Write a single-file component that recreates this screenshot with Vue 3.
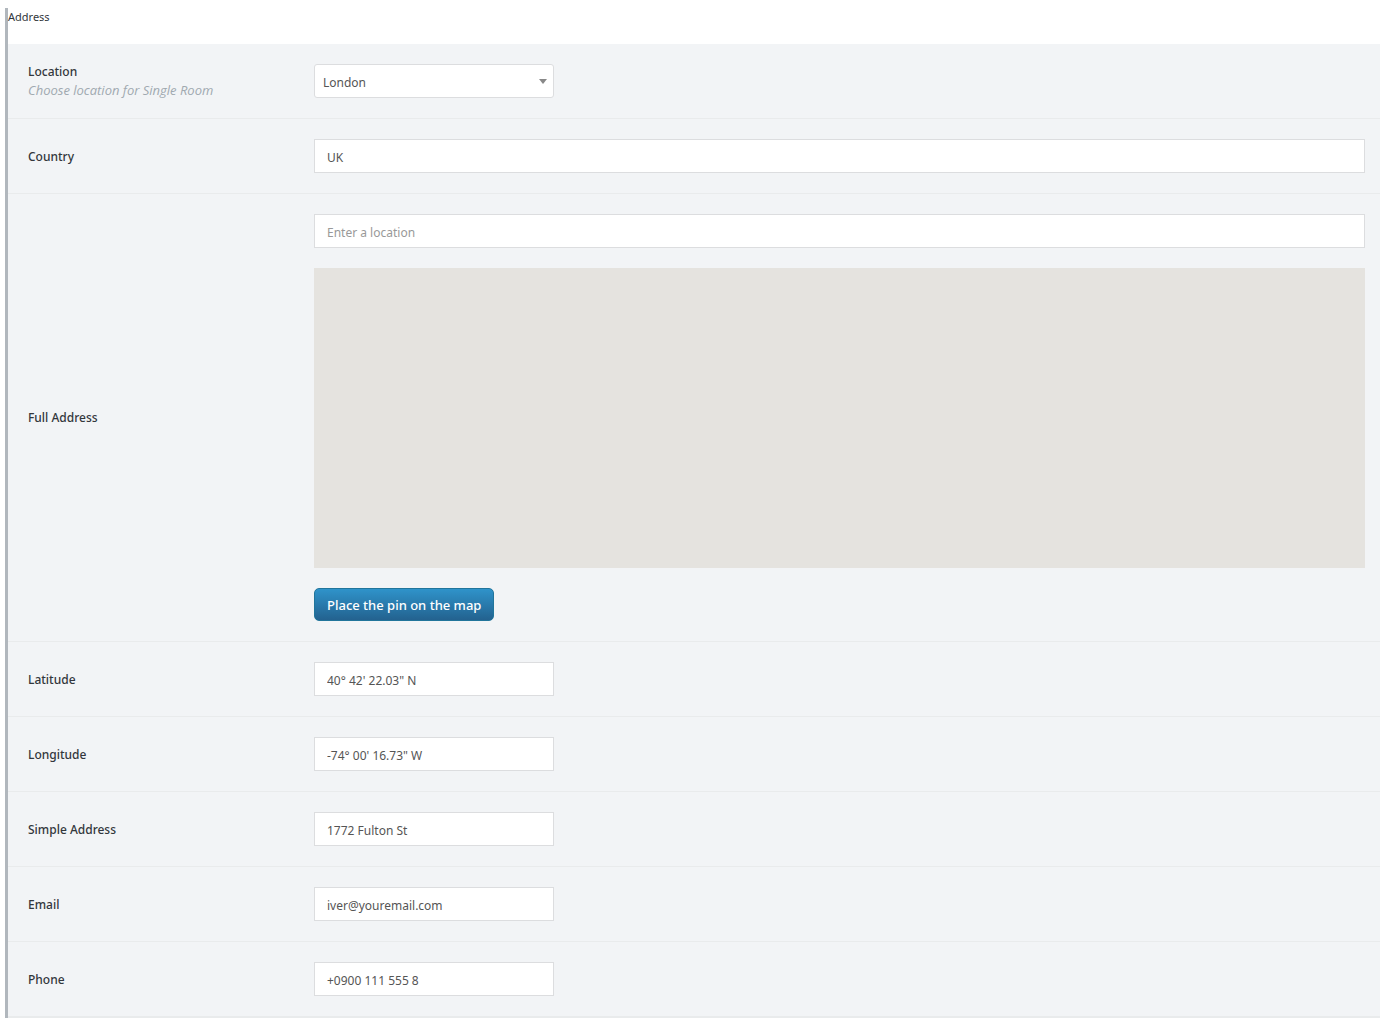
<template>
  <section class="address-panel">
    <h2 class="panel-title">Address</h2>

    <form class="fields" @submit.prevent>
      <div class="field">
        <div class="field-label">
          <label for="location">Location</label>
          <p class="description">Choose location for Single Room</p>
        </div>
        <div class="field-content">
          <div class="select-wrap">
            <select id="location" v-model="location">
              <option>London</option>
            </select>
            <svg class="arrow" width="8" height="5" viewBox="0 0 8 5" aria-hidden="true">
              <path d="M0 0h8L4 5z" fill="#888" />
            </svg>
          </div>
        </div>
      </div>

      <div class="field">
        <div class="field-label">
          <label for="country">Country</label>
        </div>
        <div class="field-content">
          <input id="country" v-model="country" type="text">
        </div>
      </div>

      <div class="field">
        <div class="field-label">
          <label for="full-address">Full Address</label>
        </div>
        <div class="field-content">
          <input id="full-address" v-model="fullAddress" type="text" placeholder="Enter a location">
          <div class="map"></div>
          <button type="button">Place the pin on the map</button>
        </div>
      </div>

      <div v-for="item in details" :key="item.id" class="field">
        <div class="field-label">
          <label :for="item.id">{{ item.label }}</label>
        </div>
        <div class="field-content">
          <input :id="item.id" v-model="item.value" class="short" type="text">
        </div>
      </div>
    </form>
  </section>
</template>

<script setup>
import { ref } from 'vue'

const location = ref('London')
const country = ref('UK')
const fullAddress = ref('')

const details = ref([
  { id: 'latitude', label: 'Latitude', value: '40° 42\' 22.03" N' },
  { id: 'longitude', label: 'Longitude', value: '-74° 00\' 16.73" W' },
  { id: 'simple-address', label: 'Simple Address', value: '1772 Fulton St' },
  { id: 'email', label: 'Email', value: 'iver@youremail.com' },
  { id: 'phone', label: 'Phone', value: '+0900 111 555 8' }
])
</script>

<style>
body {
  background: #fff;
}
</style>

<style scoped>
.address-panel {
  margin: 8px 6px 7px 5px;
  border-left: 3px solid #b1b7bd;
  font-family: "Segoe UI", "Noto Sans", sans-serif;
  font-size: 12px;
  color: #32373c;
}
.panel-title {
  margin: 0;
  padding-bottom: 18px;
  font-size: 11px;
  line-height: 18px;
  font-weight: 400;
}
.fields {
  background: #f2f4f6;
  border-bottom: 1px solid #e9ebec;
}
.field {
  display: flex;
  align-items: center;
  padding: 0 15px 0 20px;
  border-bottom: 1px solid #e9ebec;
}
.field-label {
  flex: 0 0 286px;
  line-height: 19px;
}
.field-label label {
  display: block;
  font-weight: 500;
}
.description {
  margin: 0;
  font-family: "Segoe UI", "Open Sans", sans-serif;
  font-size: 13px;
  font-style: italic;
  color: #a0a9b0;
}
.field-content {
  flex: 1;
  min-width: 0;
  display: flex;
  flex-direction: column;
  align-items: flex-start;
  gap: 20px;
  padding: 20px 0;
}
input,
select {
  box-sizing: border-box;
  width: 100%;
  height: 34px;
  margin: 0;
  padding: 2px 12px 0;
  border: 1px solid #dcdddf;
  border-radius: 0;
  background: #fff;
  font: inherit;
  color: #555;
}
input::placeholder {
  color: #999;
  opacity: 1;
}
input.short {
  max-width: 240px;
}
.select-wrap {
  position: relative;
  width: 100%;
  max-width: 240px;
}
select {
  display: block;
  padding: 2px 24px 0 8px;
  border-radius: 3px;
  appearance: none;
}
.arrow {
  position: absolute;
  top: 15px;
  right: 7px;
  pointer-events: none;
}
.map {
  width: 100%;
  height: 300px;
  background: #e5e3df;
}
button {
  height: 33px;
  padding: 0 12px;
  border: 1px solid #21759b;
  border-radius: 5px;
  background: linear-gradient(#2f93ca, #23628f);
  font: inherit;
  font-size: 13px;
  font-weight: 500;
  color: #fff;
  cursor: pointer;
}
</style>
